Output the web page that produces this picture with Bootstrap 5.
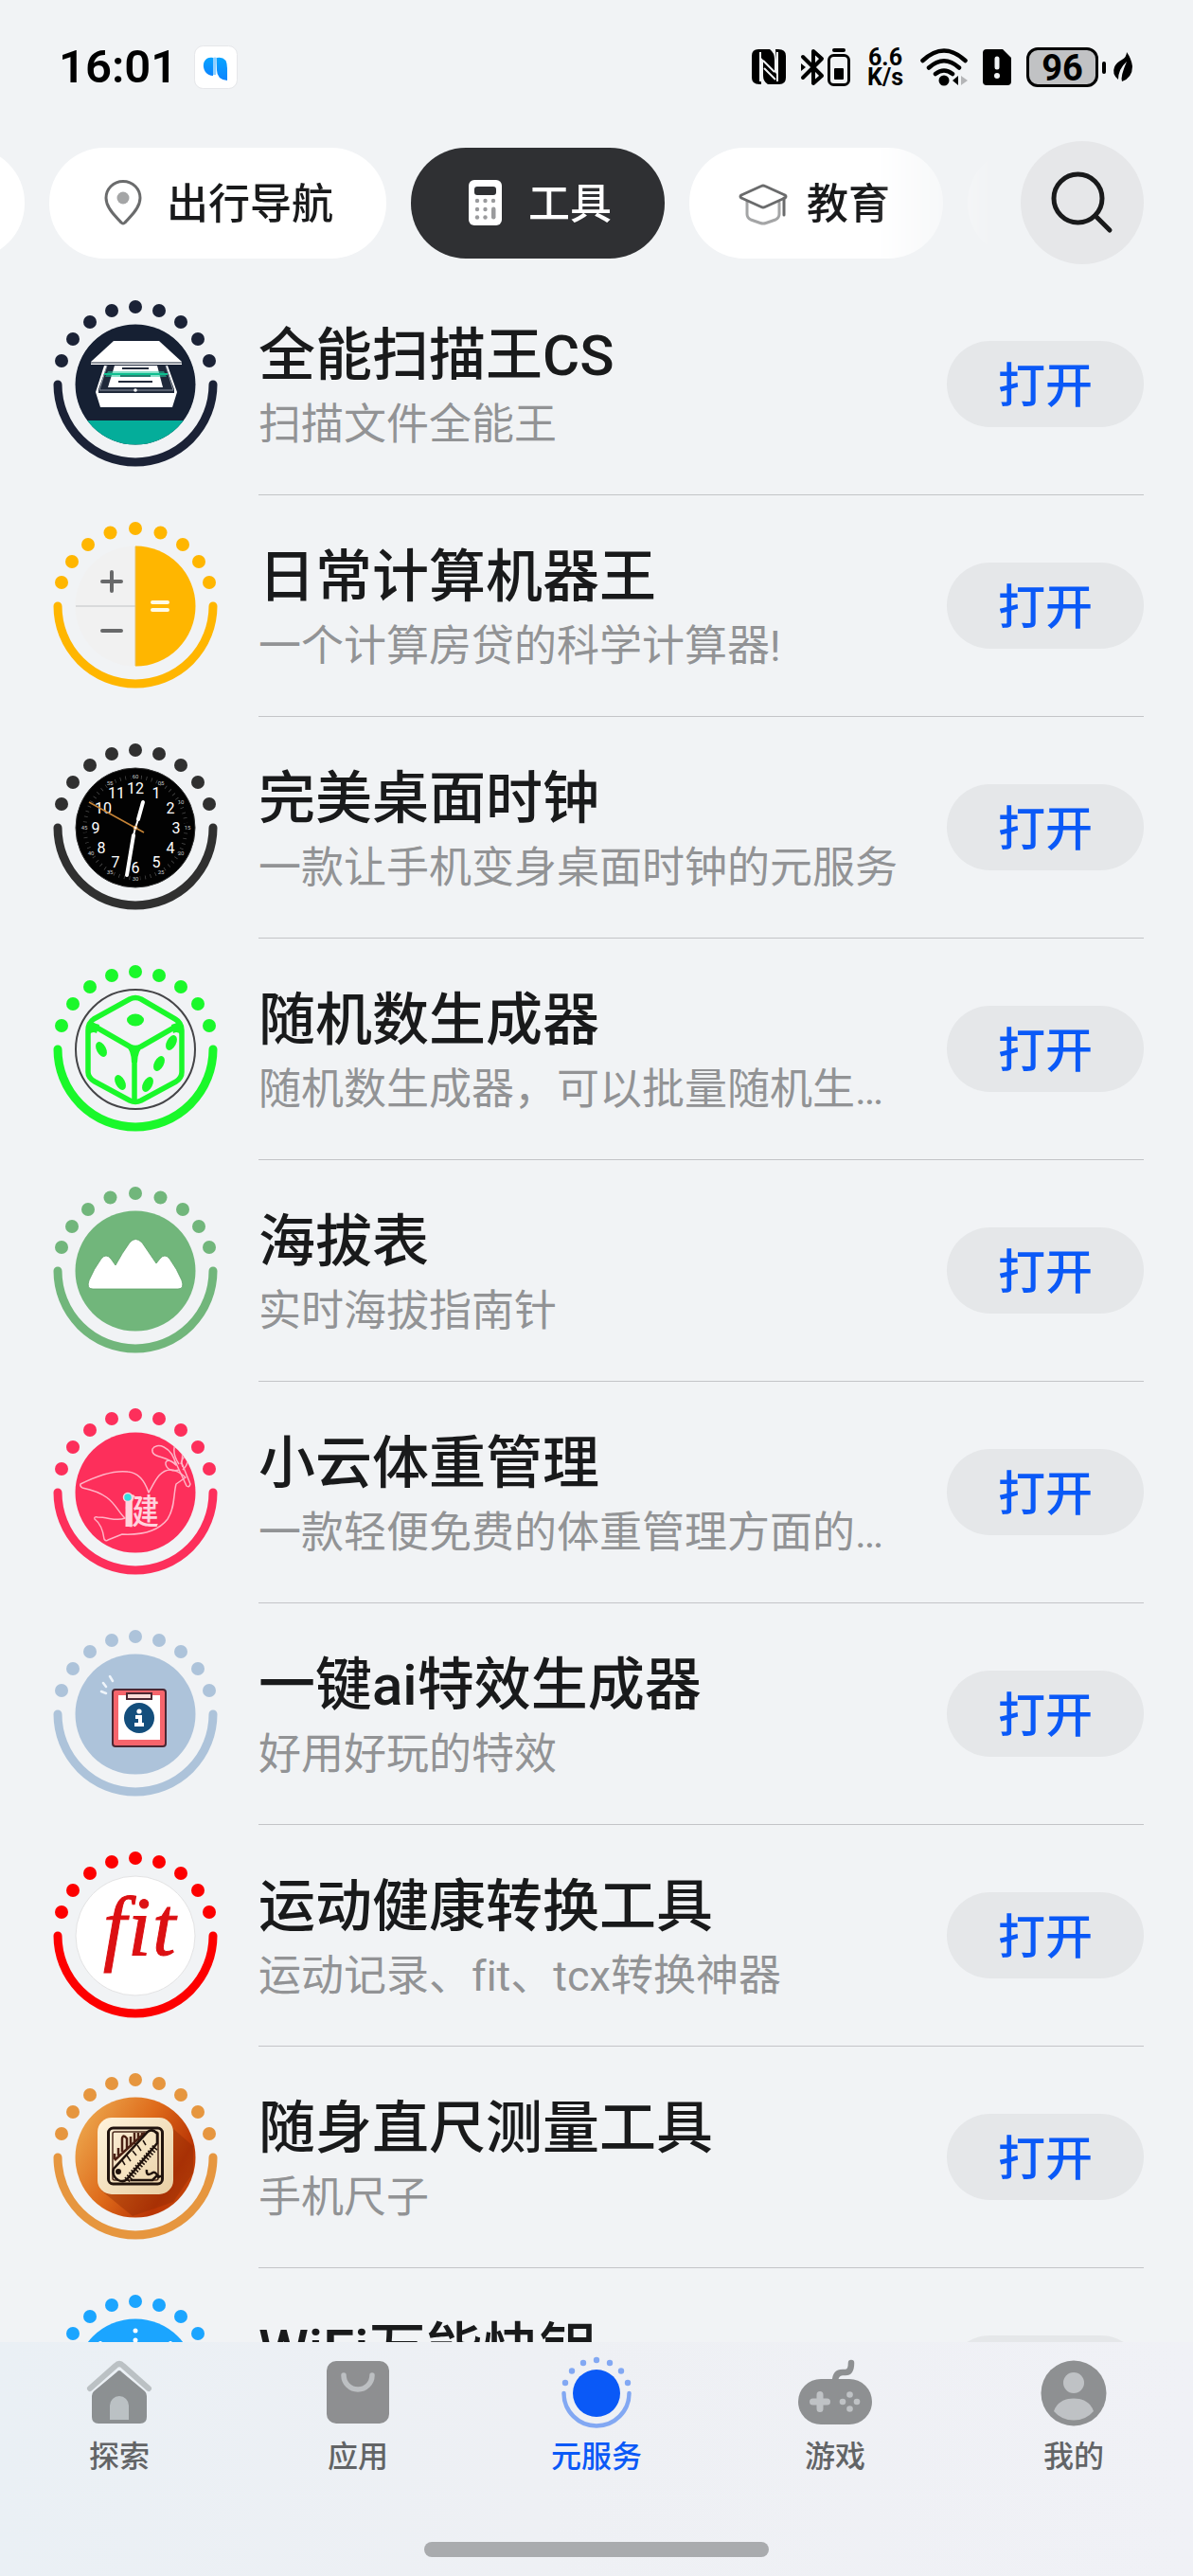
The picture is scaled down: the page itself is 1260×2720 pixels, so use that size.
<!DOCTYPE html>
<html lang="zh-CN">
<head>
<meta charset="utf-8">
<meta name="viewport" content="width=device-width, initial-scale=1">
<title>元服务 - 工具</title>
<link href="https://cdn.jsdelivr.net/npm/bootstrap@5.3.0/dist/css/bootstrap.min.css" rel="stylesheet">
<script src="https://cdn.jsdelivr.net/npm/bootstrap@5.3.0/dist/js/bootstrap.bundle.min.js"></script>
<style>
  body { background: #f1f3f5; color: #191a1b; font-family: Roboto, "Noto Sans CJK SC", sans-serif; font-variant-ligatures: none; }
  svg { display: block; flex: none; overflow: visible; }
  .status-bar { height: 142px; padding: 0 64px 0 62px; color: #000; }
  .clock-side { gap: 18px; }
  .clock-text { font-size: 49px; line-height: 60px; font-weight: 600; }
  .net-speed { font-size: 25px; line-height: 21px; font-weight: 700; width: 42px; }
  .battery-box { width: 76px; height: 42px; border: 3px solid #000; border-radius: 12px; background: #c1c2c4; font-size: 38px; line-height: 38px; font-weight: 700; }
  .battery-nub { width: 4px; height: 13px; border-radius: 2px; background: #000; }
  .ms-16 { margin-left: 16px; }
  .filter-bar { padding: 7px 52px 10px 0; gap: 26px; }
  .chip-strip { gap: 26px; min-width: 0; -webkit-mask-image: linear-gradient(to left, transparent, #000 130px); mask-image: linear-gradient(to left, transparent, #000 130px); }
  .chip { height: 117px; padding: 0 56px 0 53px; gap: 21px; border: 0; border-radius: 58px; background: #fff; color: #191a1b; font-size: 44px; line-height: 60px; font-weight: 500; white-space: nowrap; flex: none; }
  .chip-on { background: #2f3033; color: #fff; }
  .chip-before { margin-left: -133px; }
  .search-btn { width: 130px; height: 130px; border: 0; border-radius: 50%; background: #e6e7e9; flex: none; }
  .svc-list { min-height: 0; }
  .svc-row { padding: 0 52px 0 57px; gap: 44px; height: 234px; }
  .svc-body { border-bottom: 1px solid #c3c4c7; gap: 48px; min-width: 0; }
  .svc-text { padding-top: 9px; }
  .svc-name { font-size: 60px; line-height: 78px; font-weight: 500; margin: 0; white-space: nowrap; }
  .svc-desc { font-size: 45px; line-height: 68px; color: #929395; margin: 0; white-space: nowrap; }
  .open-btn { width: 208px; height: 91px; padding: 4px 0 0; border: 0; border-radius: 46px; background: #e5e7e9; color: #0a59f7; font-size: 50px; line-height: 60px; font-weight: 500; flex: none; }
  .tab-dock { height: 247px; padding-top: 14px; background: linear-gradient(to right, #eaf0f5, #eef0f4 45%, #f0f1f6); }
  .tab-link { color: #626466; font-size: 32px; line-height: 44px; font-weight: 500; text-decoration: none; gap: 5px; }
  .tab-link.current { color: #0a59f7; }
  .home-pill { width: 364px; height: 16px; border-radius: 8px; background: #a9abae; margin: 68px auto 0; }
</style>
</head>
<body>
<svg width="0" height="0" class="position-absolute" aria-hidden="true">
  <defs>
    <symbol id="ring" viewBox="-90 -90 180 180">
      <path d="M-82 0A82 82 0 0 0 82 0" fill="none" stroke="currentColor" stroke-width="9" stroke-linecap="round"/>
      <g fill="currentColor"><circle cy="-82" r="7"/><circle cx="25" cy="-78" r="7"/><circle cx="-25" cy="-78" r="7"/><circle cx="48" cy="-66" r="7"/><circle cx="-48" cy="-66" r="7"/><circle cx="66" cy="-48" r="7"/><circle cx="-66" cy="-48" r="7"/><circle cx="78" cy="-25" r="7"/><circle cx="-78" cy="-25" r="7"/></g>
    </symbol>
    <symbol id="ring-wide" viewBox="-90 -90 180 180">
      <path d="M-82 0A82 82 0 0 0 82 0" fill="none" stroke="currentColor" stroke-width="9" stroke-linecap="round"/>
      <g fill="currentColor"><circle cy="-82" r="7"/><circle cx="26.500" cy="-77.500" r="7"/><circle cx="-26.500" cy="-77.500" r="7"/><circle cx="50" cy="-65" r="7"/><circle cx="-50" cy="-65" r="7"/><circle cx="67" cy="-47" r="7"/><circle cx="-67" cy="-47" r="7"/><circle cx="78" cy="-25" r="7"/><circle cx="-78" cy="-25" r="7"/></g>
    </symbol>
    <clipPath id="disc"><circle r="63.500"/></clipPath>
    <linearGradient id="amber" x1="0" y1="0.200" x2="1" y2="0.800"><stop offset="0" stop-color="#eda94f"/><stop offset="0.450" stop-color="#de6a1a"/><stop offset="0.800" stop-color="#b93505"/><stop offset="1" stop-color="#c94a0c"/></linearGradient>
    <linearGradient id="cream" x1="0" y1="0" x2="1" y2="1"><stop offset="0" stop-color="#fff3dc"/><stop offset="1" stop-color="#e8cfa4"/></linearGradient>
    <linearGradient id="sky" x1="0" y1="0" x2="0" y2="1"><stop offset="0" stop-color="#08a4ff"/><stop offset="1" stop-color="#0c84ff"/></linearGradient>
  </defs>
</svg>

<div class="d-flex flex-column vh-100 overflow-hidden">
  <header>
    <div class="status-bar d-flex align-items-center justify-content-between">
      <div class="clock-side d-flex align-items-center">
        <span class="clock-text">16:01</span>
        <svg width="46" height="46" viewBox="0 0 46 46"><rect x="0.500" y="0.500" width="45" height="45" rx="9" fill="#fff" stroke="#e6e7ea"/><path d="M20 13C7 10 6 31 20 32Z" fill="url(#sky)"/><path d="M20 13Q22 12 24 13L23 31H20Z" fill="#8fd0ff"/><path d="M24 13Q35 11 35 24V37Q24 36 24 26Z" fill="url(#sky)"/></svg>
      </div>
      <div class="d-flex align-items-center">
        <svg width="36" height="38" viewBox="0 0 36 38"><path d="M7 0H8L10 37H8Q0 37 0 30V7Q0 0 7 0ZM28 0Q36 0 36 7V30Q36 37 29 37H28L25 0Z"/><path d="M8 0H19Q24 4 24 10V24L8 7ZM12 12L28 28V37H17Q12 34 12 28Z"/><path d="M9 3V34M27 3V34" stroke="#f1f3f5" stroke-width="2"/><path d="M12 12L24 24M13 20L25 32" stroke="#f1f3f5" stroke-width="2"/></svg>
        <svg class="ms-16" width="24" height="40" viewBox="0 0 24 40"><path d="M2 9L22 29L13 37V3L22 11L2 31" fill="none" stroke="#000" stroke-width="4" stroke-linejoin="round" stroke-linecap="round"/><path d="M0 16L5 20L0 24Z"/></svg>
        <svg class="ms-1" width="24" height="40" viewBox="0 0 24 40"><rect x="5" y="0" width="14" height="4" rx="2"/><rect x="1.500" y="7.500" width="21" height="31" rx="5" fill="none" stroke="#000" stroke-width="3"/><rect x="7" y="21" width="10" height="12" rx="1"/></svg>
        <div class="net-speed ms-16 text-center"><div>6.6</div><div>K/s</div></div>
        <svg class="ms-16" width="50" height="40" viewBox="0 0 50 40"><path d="M2.500 13Q25 -8 47.500 13M9 20.500Q25 6 41 20.500M16 27Q25 20 34 27" fill="none" stroke="#000" stroke-width="4.500" stroke-linecap="round"/><circle cx="25" cy="34" r="5.500"/><path d="M40 29V39L34 34Z"/><path d="M43 29L50 34L43 39Z" fill="#b4b5b7"/></svg>
        <svg class="ms-16" width="30" height="38" viewBox="0 0 30 38"><path d="M4 0H21L30 9V34Q30 38 26 38H4Q0 38 0 34V4Q0 0 4 0Z"/><path d="M15 10V19" stroke="#f1f3f5" stroke-width="5" stroke-linecap="round"/><circle cx="15" cy="28" r="3" fill="#f1f3f5"/></svg>
        <div class="battery-box ms-16 text-center">96</div>
        <div class="battery-nub ms-1"></div>
        <svg class="ms-2" width="20" height="34" viewBox="0 0 20 34"><path d="M14 1Q19 8 20 16Q20 28 9 32Q7 27 14 11Q5 19 5 30Q-2 24 1 17Q3 12 9 9Q14 6 14 1Z"/></svg>
      </div>
    </div>

    <nav class="filter-bar d-flex align-items-center" aria-label="分类">
      <div class="chip-strip d-flex flex-grow-1 overflow-hidden">
        <button class="chip chip-before" type="button" aria-label="上一分类"><svg width="50" height="50"></svg></button>
        <button class="chip d-flex align-items-center" type="button">
          <svg width="50" height="50" viewBox="0 0 50 50" fill="none"><path d="M25 2.500C14.500 2.500 7 10.500 7 20C7 32 20 42 23 46Q25 48 27 46C30 42 43 32 43 20C43 10.500 35.500 2.500 25 2.500Z" stroke="#6a6b6c" stroke-width="3"/><circle cx="25" cy="20" r="6.500" fill="#a4a5a6"/></svg>
          <span class="pt-1">出行导航</span>
        </button>
        <button class="chip chip-on d-flex align-items-center" type="button" aria-pressed="true">
          <svg width="50" height="50" viewBox="0 0 50 50"><rect x="8" y="1" width="35" height="48" rx="6" fill="#fff"/><rect x="14" y="8" width="23" height="9" rx="3" fill="#2f3033"/><g fill="#9a9b9d"><circle cx="17" cy="23" r="2.200"/><circle cx="25.500" cy="23" r="2.200"/><circle cx="34" cy="23" r="2.200"/><circle cx="17" cy="32" r="2.200"/><circle cx="25.500" cy="32" r="2.200"/><circle cx="17" cy="40.500" r="2.200"/><circle cx="25.500" cy="40.500" r="2.200"/><rect x="32" y="29.500" width="4.500" height="13" rx="2.200"/></g></svg>
          <span class="pt-1">工具</span>
        </button>
        <button class="chip d-flex align-items-center" type="button">
          <svg width="50" height="50" viewBox="0 0 50 50" fill="none" stroke-width="3" stroke-linejoin="round" stroke-linecap="round"><path d="M8 24V37Q8 41 12 43L22 46.500Q25 47.500 28 46.500L38 43Q42 41 42 37V25" stroke="#a4a5a6"/><path d="M23 7.500Q25 6.500 27 7.500L48 17Q50 18.500 48 20L27 29.500Q25 30.500 23 29.500L2 20Q0 18.500 2 17Z" stroke="#6a6b6c" fill="#fff"/><path d="M47 20V38" stroke="#6a6b6c"/></svg>
          <span class="pt-1">教育</span>
        </button>
        <button class="chip" type="button" aria-label="下一分类"><svg width="50" height="50"></svg></button>
      </div>
      <button class="search-btn d-flex align-items-center justify-content-center" type="button" aria-label="搜索">
        <svg width="66" height="66" viewBox="0 0 66 66" fill="none" stroke="#191a1b" stroke-width="5" stroke-linecap="round"><circle cx="28.500" cy="28.500" r="25.500"/><path d="M47 47L62 62"/></svg>
      </button>
    </nav>
  </header>

  <main class="svc-list flex-grow-1 overflow-hidden">
    <ul class="list-unstyled m-0">
      <li class="svc-row d-flex align-items-center">
        <svg width="172" height="172" viewBox="-86 -86 172 172" color="#1b2236"><use href="#ring" x="-90" y="-90" width="180" height="180"/><g clip-path="url(#disc)"><circle r="64" fill="#162033"/><rect x="-64" y="38" width="128" height="30" fill="#04ad9a"/></g><path d="M-23 -46H25L49 -24V-21H-47V-24Z" fill="#fff"/><path d="M-47 -23H49" stroke="#162033"/><path d="M-33 -20L-42 8L-37 24H39L44 8L34 -20" fill="#fff"/><path d="M-30 -20L-39 5V9H41V5L32 -20Z" fill="#20293a"/><path d="M-30 -20L-38 6H40L32 -20" fill="none" stroke="#8d95a1"/><path d="M-22 -20H23L29 3H-29Z" fill="#fff"/><path d="M-14 -17H14M-16 -9H16M-18 -3H18" stroke="#222b3b" stroke-width="2"/><path d="M-29 -14H30L33 -8H-32Z" fill="#27c79d" opacity="0.550"/><path d="M-33 -11H34" stroke="#0fbf8f" stroke-width="2"/><circle cy="6" r="1.800" fill="#fff"/></svg>
        <div class="svc-body d-flex align-items-center flex-grow-1 h-100">
          <div class="svc-text flex-grow-1 overflow-hidden"><h2 class="svc-name">全能扫描王CS</h2><p class="svc-desc">扫描文件全能王</p></div>
          <button class="open-btn" type="button">打开</button>
        </div>
      </li>
      <li class="svc-row d-flex align-items-center">
        <svg width="172" height="172" viewBox="-86 -86 172 172" color="#ffb600"><use href="#ring-wide" x="-90" y="-90" width="180" height="180"/><circle r="63.500" fill="#f1f1f1"/><path d="M0 -63.500A63.500 63.500 0 0 1 0 63.500Z" fill="#ffb600"/><path d="M-63 0H0" stroke="#d9dadb" stroke-width="2"/><path d="M0 -63V63" stroke="#e6c067" stroke-width="1"/><path d="M-35 -26H-15M-25 -36V-16M-35 26H-15" stroke="#68696a" stroke-width="4" stroke-linecap="round"/><path d="M18 -4H34M18 4H34" stroke="#fffbe6" stroke-width="4" stroke-linecap="round"/></svg>
        <div class="svc-body d-flex align-items-center flex-grow-1 h-100">
          <div class="svc-text flex-grow-1 overflow-hidden"><h2 class="svc-name">日常计算机器王</h2><p class="svc-desc">一个计算房贷的科学计算器!</p></div>
          <button class="open-btn" type="button">打开</button>
        </div>
      </li>
      <li class="svc-row d-flex align-items-center">
        <svg width="172" height="172" viewBox="-86 -86 172 172" color="#303030"><use href="#ring" x="-90" y="-90" width="180" height="180"/><circle r="63" fill="#020202" stroke="#2b2b2b"/><circle r="53.500" fill="none" stroke="#4a4a4a" stroke-width="4" stroke-dasharray="0.800 4.803"/><g fill="#020202"><circle cy="-54" r="5"/><circle cy="54" r="5"/><circle cx="54" r="5"/><circle cx="-54" r="5"/></g><g fill="#fff" font-size="16" text-anchor="middle"><text x="0" y="-36">12</text><text x="22" y="-31">1</text><text x="37" y="-15">2</text><text x="43" y="6">3</text><text x="37" y="27">4</text><text x="22" y="42">5</text><text x="0" y="48">6</text><text x="-21" y="42">7</text><text x="-36" y="27">8</text><text x="-42" y="6">9</text><text x="-34" y="-15">10</text><text x="-20" y="-31">11</text></g><g fill="#c4c4c4" font-size="6" text-anchor="middle"><text x="0" y="-52">60</text><text x="27" y="-45">05</text><text x="48" y="-25">10</text><text x="55" y="2">15</text><text x="48" y="29">20</text><text x="27" y="49">25</text><text x="0" y="56">30</text><text x="-27" y="49">35</text><text x="-47" y="29">40</text><text x="-54" y="2">45</text><text x="-27" y="-45">55</text></g><path d="M0 0L3 -9M0 0L-2 8" stroke="#fff" stroke-width="2"/><path d="M3 -9L8 -27M-2 8L-9 50" stroke="#fff" stroke-width="4" stroke-linecap="round"/><path d="M-49 -27L9 5" stroke="#c58336" stroke-width="1.500"/><circle r="2" fill="#fff" stroke="#c58336"/></svg>
        <div class="svc-body d-flex align-items-center flex-grow-1 h-100">
          <div class="svc-text flex-grow-1 overflow-hidden"><h2 class="svc-name">完美桌面时钟</h2><p class="svc-desc">一款让手机变身桌面时钟的元服务</p></div>
          <button class="open-btn" type="button">打开</button>
        </div>
      </li>
      <li class="svc-row d-flex align-items-center">
        <svg width="172" height="172" viewBox="-86 -86 172 172" color="#1af82a"><use href="#ring" x="-90" y="-90" width="180" height="180"/><circle r="63" fill="none" stroke="#454548" stroke-width="2"/><g fill="none" stroke="#1af82a" stroke-width="5.500" stroke-linejoin="round"><path d="M-6 -53Q0 -56 6 -53L42 -32Q49 -28 49 -20V24Q49 30 43 34L6 54Q0 57 -6 54L-43 34Q-50 30 -50 24V-20Q-50 -28 -44 -32Z"/><path d="M-46 -26L-6 -3Q0 0 6 -3L46 -26M-1 -1V54"/></g><path d="M-11 -6L-1 -2L10 -6Q2 2 2 14H-4Q-4 2 -11 -6ZM-48 -29L-38 -26L-41 -17Q-46 -20 -49 -15ZM47 -29L38 -26L40 -17Q45 -20 48 -15Z" fill="#1af82a"/><g fill="#1af82a"><ellipse cy="-31" rx="9" ry="6.500"/><ellipse cx="-36" cy="0" rx="5" ry="8.500" transform="rotate(-28 -36 0)"/><ellipse cx="-16" cy="35" rx="5" ry="8.500" transform="rotate(-28 -16 35)"/><ellipse cx="38" cy="-7" rx="5" ry="8.500" transform="rotate(28 38 -7)"/><ellipse cx="25" cy="15" rx="5" ry="8.500" transform="rotate(28 25 15)"/><ellipse cx="13" cy="37" rx="5" ry="8.500" transform="rotate(28 13 37)"/></g></svg>
        <div class="svc-body d-flex align-items-center flex-grow-1 h-100">
          <div class="svc-text flex-grow-1 overflow-hidden"><h2 class="svc-name">随机数生成器</h2><p class="svc-desc">随机数生成器，可以批量随机生…</p></div>
          <button class="open-btn" type="button">打开</button>
        </div>
      </li>
      <li class="svc-row d-flex align-items-center">
        <svg width="172" height="172" viewBox="-86 -86 172 172" color="#71b67b"><use href="#ring-wide" x="-90" y="-90" width="180" height="180"/><circle r="63.500" fill="#71b67b"/><path d="M-45 19Q-52 19 -49 10Q-44 -2 -36 -13Q-31 -19 -26 -13L-21 -6Q-14 -19 -6 -30Q0 -37 7 -30L22 -8L26 -13Q31 -19 36 -13Q44 -2 49 10Q52 19 45 19Z" fill="#fff" stroke="#5ea168" stroke-width="0.800"/></svg>
        <div class="svc-body d-flex align-items-center flex-grow-1 h-100">
          <div class="svc-text flex-grow-1 overflow-hidden"><h2 class="svc-name">海拔表</h2><p class="svc-desc">实时海拔指南针</p></div>
          <button class="open-btn" type="button">打开</button>
        </div>
      </li>
      <li class="svc-row d-flex align-items-center">
        <svg width="172" height="172" viewBox="-86 -86 172 172" color="#fd2f5b"><use href="#ring" x="-90" y="-90" width="180" height="180"/><circle r="63.500" fill="#fd2f5b"/><g fill="none" stroke="#ffb4c6" stroke-width="1.500" stroke-linejoin="round" clip-path="url(#disc)"><path d="M-58 -9C-42 -17 -24 -24 -8 -22C4 -21 10 -12 14 0C20 -10 25 -24 37 -24C43 -24 47 -21 53 -16L43 -9C40 2 42 16 34 28C24 41 6 45 -14 44L-29 50Q-31 52 -33 49Q-35 34 -43 28Q-44 25 -40 26C-28 26 -20 31 -11 27C-22 17 -22 2 -56 -5Q-59 -7 -58 -9Z"/><path d="M42 -33L54 -7Q57 -5 58 -9L49 -31"/><path d="M43 -29C38 -50 22 -53 18 -46C16 -36 32 -40 43 -29Z"/><path d="M43 -29C38 -35 31 -35 32 -30C33 -24 40 -22 46 -24"/><path d="M46 -30C38 -42 41 -50 43 -54C50 -48 51 -38 48 -30M50 -27C47 -35 52 -39 54 -38C57 -33 54 -28 50 -24"/></g><text x="7" y="33" font-size="36" font-weight="500" text-anchor="middle" fill="#ffd3de" font-family="Noto Sans CJK SC, sans-serif">健</text><path d="M-8 10V36" stroke="#ffd3de" stroke-width="5"/><circle cx="-8" cy="5" r="4.500" fill="#35dfe0" stroke="#ffd3de" stroke-width="1.500"/></svg>
        <div class="svc-body d-flex align-items-center flex-grow-1 h-100">
          <div class="svc-text flex-grow-1 overflow-hidden"><h2 class="svc-name">小云体重管理</h2><p class="svc-desc">一款轻便免费的体重管理方面的…</p></div>
          <button class="open-btn" type="button">打开</button>
        </div>
      </li>
      <li class="svc-row d-flex align-items-center">
        <svg width="172" height="172" viewBox="-86 -86 172 172" color="#adc3da"><use href="#ring" x="-90" y="-90" width="180" height="180"/><circle r="63.500" fill="#adc3da"/><path d="M-24 -35L-27 -40M-31 -29L-34 -33M-31 -22L-36 -24" stroke="#eef4fa" stroke-width="2.500" stroke-linecap="round"/><rect x="-24" y="-26" width="56" height="60" rx="3" fill="#f6656c" stroke="#4b2833" stroke-width="2"/><rect x="-18" y="-20" width="44" height="47" fill="#fff"/><rect x="-9" y="-22" width="26" height="6" fill="#fbdcd9" stroke="#4b2833" stroke-width="2"/><circle cx="4" cy="4" r="16" fill="#134e7c"/><circle cx="4" cy="-3" r="2.600" fill="#fff"/><path d="M0 3H5V11M-1 11H9" fill="none" stroke="#fff" stroke-width="4"/></svg>
        <div class="svc-body d-flex align-items-center flex-grow-1 h-100">
          <div class="svc-text flex-grow-1 overflow-hidden"><h2 class="svc-name">一键ai特效生成器</h2><p class="svc-desc">好用好玩的特效</p></div>
          <button class="open-btn" type="button">打开</button>
        </div>
      </li>
      <li class="svc-row d-flex align-items-center">
        <svg width="172" height="172" viewBox="-86 -86 172 172" color="#fd0000"><use href="#ring" x="-90" y="-90" width="180" height="180"/><circle r="63" fill="#fff" stroke="#e3e3e4"/><text x="-34 -8 18" y="20" font-size="88" font-style="italic" fill="#dc1013" stroke="#dc1013" font-family="Liberation Serif, serif">fit</text></svg>
        <div class="svc-body d-flex align-items-center flex-grow-1 h-100">
          <div class="svc-text flex-grow-1 overflow-hidden"><h2 class="svc-name">运动健康转换工具</h2><p class="svc-desc">运动记录、fit、tcx转换神器</p></div>
          <button class="open-btn" type="button">打开</button>
        </div>
      </li>
      <li class="svc-row d-flex align-items-center">
        <svg width="172" height="172" viewBox="-86 -86 172 172" color="#e6963f"><use href="#ring" x="-90" y="-90" width="180" height="180"/><circle r="63.500" fill="url(#amber)"/><path d="M39 -31L61 -12V16L40 47L-3 62L-36 35Z" fill="#8f2a04" opacity="0.400"/><rect x="-40" y="-42" width="80" height="81" rx="15" fill="url(#cream)"/><rect x="-28.500" y="-31" width="57" height="59" rx="5" fill="none" stroke="#20130d" stroke-width="3"/><rect x="-24" y="-27" width="48" height="51" rx="2" fill="none" stroke="#4a2a1c" stroke-width="1.500"/><path d="M-22 2V-4M-18 -2V-10M-14 -6V-20Q-13 -25 -9 -20V-8M-5 -11V-22M-1 -14V-26M3 -18V-26M7 -21V-26M-22 3L10 -26" fill="none" stroke="#4a2013" stroke-width="2.500"/><path d="M-23 12L13 -27Q18 -31 23 -25V-15L-8 22Q-12 27 -18 24Q-25 20 -23 12Z" fill="#f6e4c2" stroke="#20130d" stroke-width="2.500"/><path d="M-9 24L22 -12" stroke="#20130d" stroke-width="7" stroke-dasharray="1.600 1.800"/><path d="M-14 3L-11 8M-9 -2L-5 4M-3 -7L1 -2M2 -13L6 -7M8 -18L11 -13" stroke="#20130d" stroke-width="1.500"/><circle cx="-18" cy="15" r="3" fill="#20130d"/><path d="M12 13Q11 20 17 17Q21 13 25 22M-5 24H18L22 20H27" fill="none" stroke="#20130d" stroke-width="2.500"/></svg>
        <div class="svc-body d-flex align-items-center flex-grow-1 h-100">
          <div class="svc-text flex-grow-1 overflow-hidden"><h2 class="svc-name">随身直尺测量工具</h2><p class="svc-desc">手机尺子</p></div>
          <button class="open-btn" type="button">打开</button>
        </div>
      </li>
      <li class="svc-row d-flex align-items-center">
        <svg width="172" height="172" viewBox="-86 -86 172 172" color="#1ba5ff"><use href="#ring" x="-90" y="-90" width="180" height="180"/><circle r="63.500" fill="#1ba5ff"/><g fill="#fff"><circle cy="-51" r="2.500"/><circle cy="-41" r="2.500"/><circle cx="-37" cy="-38" r="2"/><circle cx="37" cy="-38" r="2"/></g></svg>
        <div class="svc-body d-flex align-items-center flex-grow-1 h-100">
          <div class="svc-text flex-grow-1 overflow-hidden"><h2 class="svc-name">WiFi万能快钥</h2><p class="svc-desc">&nbsp;</p></div>
          <button class="open-btn" type="button" aria-label="打开"></button>
        </div>
      </li>
    </ul>
  </main>

  <footer class="tab-dock flex-shrink-0">
    <nav class="row g-0" aria-label="主导航">
      <a class="tab-link col d-flex flex-column align-items-center" href="#">
        <svg width="80" height="80" viewBox="0 0 80 80"><path d="M9 35L36 11Q40 7 44 11L71 35" fill="none" stroke="#bbc1c4" stroke-width="6" stroke-linecap="round"/><path d="M37 18Q40 14 43 18L67 38Q69 40 69 43V65Q69 72 62 72H18Q11 72 11 65V43Q11 40 13 38Z" fill="#8c9092"/><path d="M30 68V53A10 10 0 0 1 50 53V68Z" fill="#bbc1c4"/></svg>
        探索
      </a>
      <a class="tab-link col d-flex flex-column align-items-center" href="#">
        <svg width="80" height="80" viewBox="0 0 80 80"><rect x="7" y="6" width="66" height="66" rx="10" fill="#8e8f91"/><path d="M25 21A15 15 0 0 0 55 21" fill="none" stroke="#bcbfc2" stroke-width="5.500" stroke-linecap="round"/></svg>
        应用
      </a>
      <a class="tab-link current col d-flex flex-column align-items-center" href="#" aria-current="page">
        <svg width="80" height="80" viewBox="-40 -40 80 80"><circle r="25" fill="#0a59f7"/><path d="M-34.500 0A34.500 34.500 0 0 0 34.500 0" fill="none" stroke="#82a8f3" stroke-width="4.500" stroke-linecap="round"/><g fill="#82a8f3"><circle cy="-35" r="3.200"/><circle cx="14" cy="-32" r="3.200"/><circle cx="-14" cy="-32" r="3.200"/><circle cx="26" cy="-23.500" r="3.200"/><circle cx="-26" cy="-23.500" r="3.200"/><circle cx="33" cy="-11" r="3.200"/><circle cx="-33" cy="-11" r="3.200"/></g></svg>
        元服务
      </a>
      <a class="tab-link col d-flex flex-column align-items-center" href="#">
        <svg width="80" height="80" viewBox="0 0 80 80"><path d="M40 28Q40 18 48 18H51Q57 18 57 8" fill="none" stroke="#8e9092" stroke-width="6.500" stroke-linecap="round"/><rect x="1" y="25" width="78" height="48" rx="24" fill="#8e9092"/><path d="M16.500 49H31.500M24 41.500V56.500" stroke="#bfc2c5" stroke-width="7" stroke-linecap="round"/><g fill="#bfc2c5"><circle cx="48" cy="49" r="3.300"/><circle cx="63" cy="49" r="3.300"/><circle cx="55.500" cy="41.500" r="3.300"/><circle cx="55.500" cy="56.500" r="3.300"/></g></svg>
        游戏
      </a>
      <a class="tab-link col d-flex flex-column align-items-center" href="#">
        <svg width="80" height="80" viewBox="0 0 80 80"><circle cx="40" cy="40" r="34.500" fill="#8e9092"/><circle cx="40" cy="29" r="11" fill="#bfc2c5"/><path d="M19 59C22 50 30 45.500 40 45.500S58 50 61 59Q53 68.500 40 68.500T19 59Z" fill="#bfc2c5"/></svg>
        我的
      </a>
    </nav>
    <div class="home-pill"></div>
  </footer>
</div>
</body>
</html>
